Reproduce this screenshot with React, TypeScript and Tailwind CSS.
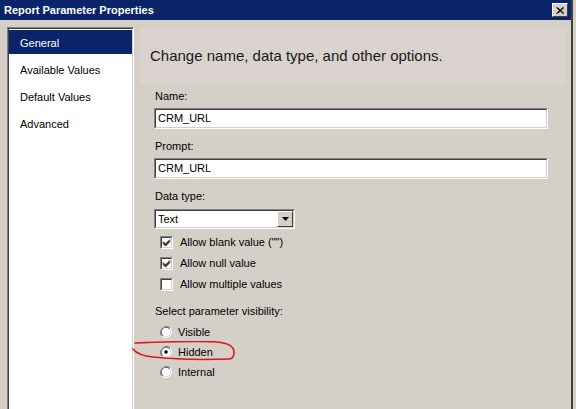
import React from 'react';

const ui = { fontFamily: '"Liberation Sans", Arial, sans-serif' };

function Sunken({ className = '', children }: { className?: string; children?: React.ReactNode }) {
  return (
    <div className={`border border-t-[#808080] border-l-[#808080] border-b-white border-r-white ${className}`}>
      <div className="h-full w-full border border-t-[#404040] border-l-[#404040] border-b-[#d4d0c8] border-r-[#d4d0c8] bg-white">
        {children}
      </div>
    </div>
  );
}

function CheckBox({ checked, label }: { checked: boolean; label: string }) {
  return (
    <div className="flex h-[21px] items-center pl-[20px]">
      <Sunken className="h-[13px] w-[13px] shrink-0">
        {checked && (
          <svg width="9" height="9" viewBox="0 0 9 9" className="block">
            <path d="M1 3.5 L3.5 6 L8 1.5 M1 4.5 L3.5 7 L8 2.5 M1 5.5 L3.5 8 L8 3.5" stroke="#000" strokeWidth="1" fill="none" />
          </svg>
        )}
      </Sunken>
      <span className="ml-[7px] text-[11px] text-black">{label}</span>
    </div>
  );
}

function Radio({ checked, label }: { checked: boolean; label: string }) {
  return (
    <div className="flex h-[20px] items-center pl-[20px]">
      <svg width="12" height="12" viewBox="0 0 12 12" className="block shrink-0">
        <path d="M10.2 1.8 A6 6 0 0 0 1.8 10.2" stroke="#808080" strokeWidth="1" fill="none" />
        <path d="M9.5 2.5 A5 5 0 0 0 2.5 9.5" stroke="#404040" strokeWidth="1" fill="none" />
        <path d="M1.8 10.2 A6 6 0 0 0 10.2 1.8" stroke="#ffffff" strokeWidth="1" fill="none" />
        <circle cx="6" cy="6" r="4.3" fill="#fff" />
        {checked && <circle cx="6" cy="6" r="1.8" fill="#000" />}
      </svg>
      <span className="ml-[6px] text-[11px] text-black">{label}</span>
    </div>
  );
}

function Label({ text, className = '' }: { text: string; className?: string }) {
  return <div className={`h-[13px] pl-[15px] text-[11px] leading-[13px] text-black ${className}`}>{text}</div>;
}

function Field({ label, value }: { label: string; value: string }) {
  return (
    <div>
      <Label text={label} />
      <Sunken className="ml-[14px] mt-[5px] h-[21px] w-[394px]">
        <div className="pl-[2px] text-[11px] leading-[17px] text-black">{value}</div>
      </Sunken>
    </div>
  );
}

export default function App() {
  const pages = ['General', 'Available Values', 'Default Values', 'Advanced'];

  return (
    <div className="flex h-[409px] w-[576px] overflow-hidden bg-[#d4d0c8]" style={ui}>
      <div className="flex h-full w-[573px] flex-col border-r-2 border-[#404040]">
        {/* title bar */}
        <div className="flex h-[20px] shrink-0 items-center justify-between bg-[#0a246a] pl-[4px] pr-[3px]">
          <span className="text-[11px] font-bold text-white">Report Parameter Properties</span>
          <div className="flex h-[14px] w-[16px] items-center justify-center border border-t-white border-l-white border-b-[#404040] border-r-[#404040] bg-[#d4d0c8]">
            <svg width="8" height="7" viewBox="0 0 8 7">
              <path d="M0.5 0.5 L7 6.5 M1.5 0.5 L8 6.5 M7 0.5 L0.5 6.5 M8 0.5 L1.5 6.5" stroke="#000" strokeWidth="1" />
            </svg>
          </div>
        </div>

        <div className="flex min-h-0 flex-1 pt-[7px]">
          {/* page list */}
          <Sunken className="ml-[7px] h-[390px] w-[127px] shrink-0">
            <div className="pt-[1px]">
              {pages.map((p, i) => (
                <div
                  key={p}
                  className={`mb-[3px] flex h-[24px] items-center pl-[11px] pt-[3px] text-[11px] ${
                    i === 0 ? 'bg-[#0a246a] text-white' : 'text-black'
                  }`}
                >
                  {p}
                </div>
              ))}
            </div>
          </Sunken>

          {/* content */}
          <div className="relative ml-[6px] mt-[1px] w-[426px]">
            <div className="flex h-[57px] items-center bg-[#d9d2cf] pl-[10px] text-[15px] text-[#1a1a1a]">
              Change name, data type, and other options.
            </div>

            <div className="mt-[5px]">
              <Field label="Name:" value="CRM_URL" />
            </div>
            <div className="mt-[11px]">
              <Field label="Prompt:" value="CRM_URL" />
            </div>

            <Label text="Data type:" className="mt-[11px]" />
            <Sunken className="ml-[14px] mt-[6px] h-[20px] w-[141px]">
              <div className="flex h-full items-center justify-between">
                <span className="pl-[2px] text-[11px] text-black">Text</span>
                <div className="flex h-[16px] w-[16px] items-center justify-center border border-t-white border-l-white border-b-[#404040] border-r-[#404040] bg-[#d4d0c8]">
                  <svg width="7" height="4" viewBox="0 0 7 4">
                    <path d="M0 0 H7 L3.5 4 Z" fill="#000" />
                  </svg>
                </div>
              </div>
            </Sunken>

            <div className="mt-[3px]">
              <CheckBox checked label={'Allow blank value ("")'} />
              <CheckBox checked label="Allow null value" />
              <CheckBox checked={false} label="Allow multiple values" />
            </div>

            <Label text="Select parameter visibility:" className="mt-[10px]" />
            <div className="mt-[4px]">
              <Radio checked={false} label="Visible" />
              <Radio checked label="Hidden" />
              <Radio checked={false} label="Internal" />
            </div>

            {/* red annotation */}
            <svg className="absolute left-[-9px] top-[313px]" width="110" height="22" viewBox="0 0 110 22">
              <path
                d="M4 2 C30 1 70 0 86 1 C96 2 103 5 103 11 C103 16 101 18 98 18 C70 19 40 18 22 16 C12 15 5 12 2 8"
                stroke="#e0141c"
                strokeWidth="1.6"
                fill="none"
                strokeLinecap="round"
              />
            </svg>
          </div>
        </div>
      </div>
    </div>
  );
}
